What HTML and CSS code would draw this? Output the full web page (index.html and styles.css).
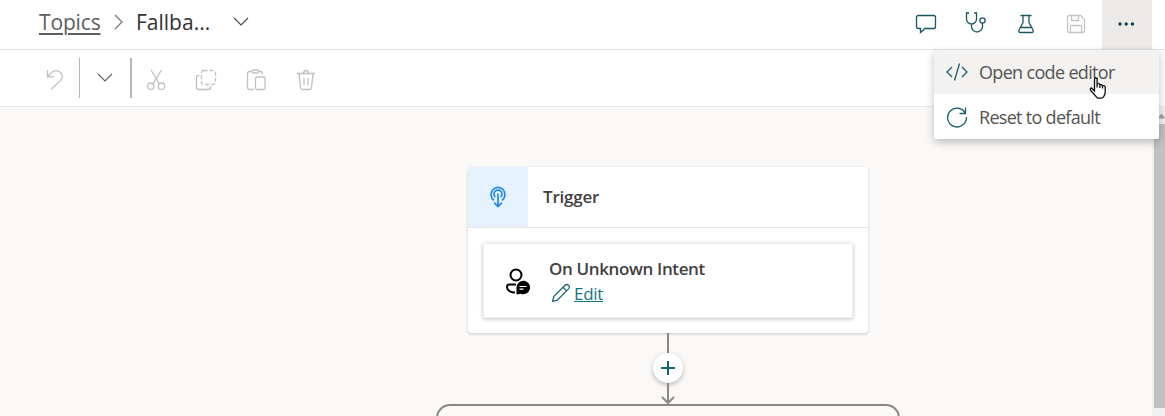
FILE: index.html
```html
<!DOCTYPE html>
<html lang="en">
<head>
<meta charset="utf-8">
<title>Topics</title>
<link rel="stylesheet" href="styles.css">
</head>
<body>
<div class="app">
  <header class="topbar">
    <nav class="crumbs">
      <a class="crumb-link">Topics</a>
      <svg class="crumb-sep" width="10" height="16" viewBox="0 0 10 16"><path d="M1 1l7 7-7 7"/></svg>
      <span class="crumb-current">Fallba...</span>
      <svg class="chev" width="16" height="10" viewBox="0 0 16 10"><path d="M1 1l7 7 7-7"/></svg>
    </nav>
    <div class="actions">
      <button class="action"><svg width="22" height="22" viewBox="0 0 22 22"><path d="M3.500 2.500h15q2 0 2 2v9q0 2-2 2h-8.500l-4.500 4v-4h-2q-2 0-2-2v-9q0-2 2-2z"/></svg></button>
      <button class="action raised"><svg width="22" height="24" viewBox="0 0 22 24"><path d="M4 2H1.500v6a5 5 0 0 0 10 0V2H9M6.500 13v2.500a5 5 0 0 0 11 0V12"/><circle cx="17.500" cy="9.500" r="2.600"/></svg></button>
      <button class="action"><svg width="20" height="22" viewBox="0 0 20 22"><path d="M4.500 2.500h11M7 2.500v7L3 17q-.8 2.500 1.500 2.500h11Q17.800 19.500 17 17l-4-7.500v-7M5 14.500h10"/></svg></button>
      <button class="action muted"><svg width="20" height="20" viewBox="0 0 20 20"><path d="M3.500 1.500h11l4 4v11q0 2-2 2h-13q-2 0-2-2v-13q0-2 2-2zM5.500 1.500v5h7v-5M4.500 18.500v-6q0-1 1-1h9q1 0 1 1v6"/></svg></button>
      <button class="action more"><svg width="18" height="6" viewBox="0 0 18 6"><circle cx="3" cy="3" r="1.700"/><circle cx="9.200" cy="3" r="1.700"/><circle cx="15.400" cy="3" r="1.700"/></svg></button>
    </div>
  </header>

  <div class="toolbar">
    <button class="tool undo"><svg width="20" height="22" viewBox="0 0 20 22"><path d="M2.500 2v6.800h6.800M2.800 8.500l4-4.200C13-.5 20.800 7 15.500 12.700L6 21.200"/></svg></button>
    <i class="rule"></i>
    <button class="tool drop"><svg class="chev" width="16" height="10" viewBox="0 0 16 10"><path d="M1 1l7 7 7-7"/></svg></button>
    <i class="rule thick"></i>
    <button class="tool"><svg width="20" height="22" viewBox="0 0 20 22"><path d="M5 1l8.500 14M15.500 1L7 15"/><circle cx="4.800" cy="17.200" r="3.200"/><circle cx="15.500" cy="17.200" r="3.200"/></svg></button>
    <button class="tool"><svg width="22" height="22" viewBox="0 0 22 22"><path d="M4.500 6.500h-1q-2 0-2 2V18q0 2.500 2.500 2.500h9.500q2 0 2-2v-1.500"/><rect x="6.500" y="1.500" width="14" height="14" rx="2" stroke-dasharray="4 2"/></svg></button>
    <button class="tool"><svg width="20" height="22" viewBox="0 0 20 22"><path d="M8 20.500H3.500q-2 0-2-2v-14q0-2 2-2H6M12 2.500h2.500q2 0 2 2v1"/><rect x="6" y="1" width="6.500" height="3" rx="1.500"/><rect x="9.500" y="8" width="9.500" height="12.500" rx="1.500"/></svg></button>
    <button class="tool"><svg width="20" height="22" viewBox="0 0 20 22"><path d="M1 4.500h18M7.500 4.500q0-3 2.500-3t2.500 3M3 4.500l1.500 14q.2 2 2 2h7q1.800 0 2-2L17 4.500M8 9v7M12 9v7"/></svg></button>
  </div>

  <main class="workspace">
    <div class="canvas">
      <section class="card">
        <div class="card-head">
          <div class="card-icon"><svg width="18" height="24" viewBox="0 0 18 24"><path d="M5 15.200a7 7 0 1 1 8 0M6.300 12a4 4 0 1 1 5.400 0M9 8.500v13M5 17.500l4 4 4-4"/></svg></div>
          <h2 class="card-title">Trigger</h2>
        </div>
        <div class="card-body">
          <div class="intent">
            <svg class="person" width="26" height="28" viewBox="0 0 26 28"><circle cx="11" cy="7" r="5.500"/><path d="M11 16.500H4q-2 0-2 2.500c0 3.500 4 5.500 8 5.500"/><path class="solid" d="M11.500 26.600V19.500a6.800 6.800 0 1 1 4.200 6.300z"/><path class="lines" d="M14.500 18.500h7M14.500 21.200h4"/></svg>
            <div>
              <div class="intent-name">On Unknown Intent</div>
              <div class="edit-row">
                <svg width="20" height="20" viewBox="0 0 20 20"><path d="M1.500 18.500l1.300-5L14 2.300q1.800-1.600 3.500 0t0 3.500L6.300 17.200zM12 4.300l3.700 3.700"/></svg>
                <a class="edit-link">Edit</a>
              </div>
            </div>
          </div>
        </div>
      </section>
      <div class="connector">
        <i class="stem"></i>
        <button class="add"><svg width="16" height="16" viewBox="0 0 16 16"><path d="M1 8h14M8 1v14"/></svg></button>
        <svg class="arrow" width="16" height="22" viewBox="0 0 16 22"><path d="M8 0v20M2 14l6 6 6-6"/></svg>
      </div>
      <div class="next-node"></div>
    </div>
    <div class="scroll"><svg width="11" height="17" viewBox="0 0 11 17"><path d="M3.500 11.500l4-5 4 5z"/></svg><div class="thumb"></div></div>
  </main>

  <div class="menu">
    <div class="menu-item hover"><svg width="22" height="20" viewBox="0 0 22 20"><path d="M6 5l-5 5 5 5M16 5l5 5-5 5M13.500 1.500l-5 17"/></svg><span class="open-label">Open code editor</span></div>
    <div class="menu-item"><svg width="22" height="22" viewBox="0 0 22 22"><path d="M19.500 7.500A9.400 9.400 0 1 0 20.400 11M19.500 1.500v6h-6"/></svg><span class="reset-label">Reset to default</span></div>
  </div>
  <svg class="pointer" width="18" height="22" viewBox="0 0 18 22"><path d="M5.500 14V2.500q0-1.500 1.300-1.500t1.300 1.500V7q2.300-1 2.700.8 2-.8 2.500 1 2.600-.6 2.900 1.500V15q0 2.500-1.700 5l-2 1.200H8.500L2 13.800q-1.800-2.600.5-2.800zM8.100 7v3.500M10.900 8v3M13.500 9v2.500"/></svg>
</div>
</body>
</html>
```

FILE: styles.css
```css
* { box-sizing: border-box; }
body { margin: 0; overflow: hidden; font-family: "Open Sans", "Noto Sans", sans-serif; color: #323130; }
button { border: 0; padding: 0; background: none; }
svg { display: block; flex: none; fill: none; stroke: currentColor; stroke-width: 1.3; }
.app { position: relative; height: 416px; display: flex; flex-direction: column; background: #fff; }

.topbar { height: 50px; flex: none; display: flex; justify-content: space-between; border-bottom: 1px solid #e6e6e6; padding: 0 13px 0 39px; }
.crumbs { display: flex; align-items: center; height: 44px; font-size: 21px; line-height: 28px; }
.crumb-link { width: 61px; color: #605e5c; text-decoration: underline; text-decoration-thickness: 2px; text-underline-offset: 3px; letter-spacing: -0.15px; white-space: nowrap; }
.crumb-sep { margin: 0 12px 0 14px; color: #777; }
.crumb-current { width: 74px; letter-spacing: 0; white-space: nowrap; }
.crumbs .chev { margin: 0 0 0 23px; color: #484644; stroke-width: 1.1; }
.actions { display: flex; }
.action { width: 50px; height: 49px; display: flex; align-items: center; justify-content: center; color: #165762; padding: 0 2px 1px 0; }
.raised { padding-bottom: 4px; }
.muted { color: #c4c4c4; }
.more { background: #ebeae9; color: #0b4650; }
.more svg { fill: currentColor; stroke: none; }

.toolbar { height: 57px; flex: none; display: flex; align-items: center; border-bottom: 1px solid #e9e9e9; padding-left: 30px; }
.tool { width: 50px; height: 42px; display: flex; align-items: center; justify-content: center; color: #c0c0c0; padding: 4px 2px 0 0; }
.undo { width: 49px; padding: 2px 0 0; }
.drop { color: #605e5c; padding: 0; }
.drop svg { stroke-width: 1.1; }
.rule { width: 1px; height: 40px; background: #b5b5b5; }
.rule.thick { width: 2px; }

.workspace { flex: 1; min-height: 0; display: flex; background: #faf9f8; }
.canvas { flex: 1; display: flex; flex-direction: column; align-items: center; padding: 60px 0 0 184px; overflow: hidden; }
.card { width: 400px; height: 166px; flex: none; background: #fff; border-radius: 4px; box-shadow: 0 1px 3px rgba(0,0,0,.2); overflow: hidden; }
.card-head { height: 61px; display: flex; border-bottom: 1px solid #e6e6e6; }
.card-icon { width: 60px; display: flex; align-items: center; justify-content: center; background: #e5f1fe; color: #2188e9; }
.card-icon svg { stroke-width: 1.7; }
.card-title { margin: 0 0 0 15px; color: #42403f; font-size: 17px; font-weight: 600; line-height: 60px; letter-spacing: -0.2px; }
.card-body { padding: 15px; }
.intent { height: 75px; display: flex; padding: 13px 0 0 21px; border: 1px solid #eee; border-radius: 2px; box-shadow: 0 1px 4px rgba(0,0,0,.24); }
.person { margin: 11px 18px 0 0; color: #000; stroke-width: 2; }
.solid { fill: #000; stroke: none; }
.lines { stroke: #fff; stroke-width: 1.2; }
.intent-name { color: #42403f; font-size: 17px; line-height: 24px; font-weight: 600; letter-spacing: -0.36px; }
.edit-row { display: flex; align-items: center; gap: 3px; height: 24px; margin-left: 2px; color: #155f70; }
.edit-row svg { stroke-width: 1.2; }
.edit-link { font-size: 17px; color: #177386; text-decoration: underline; letter-spacing: -0.3px; }
.connector { height: 71px; flex: none; display: flex; flex-direction: column; align-items: center; color: #8a8886; }
.stem { width: 2px; height: 20px; flex: none; background: #8a8886; }
.add { width: 30px; height: 30px; flex: none; border-radius: 50%; background: #fff; color: #0f687a; box-shadow: 0 2px 5px rgba(0,0,0,.25); display: flex; align-items: center; justify-content: center; }
.add svg, .arrow { stroke-width: 2; }
.next-node { width: 464px; height: 80px; flex: none; border: 2px solid #8a8886; border-radius: 14px; }
.scroll { width: 13px; padding-left: 2px; background: #f0f0f0; }
.scroll svg { fill: #a0a0a0; stroke: none; }
.thumb { height: 284px; background: #c1c1c1; }

.menu { position: absolute; left: 934px; top: 50px; width: 225px; background: #fff; border-radius: 2px; box-shadow: 0 3px 8px rgba(0,0,0,.25); }
.menu-item { height: 44px; display: flex; align-items: center; gap: 11px; padding-left: 12px; font-size: 18px; white-space: nowrap; color: #555351; }
.menu-item + .menu-item { height: 45px; }
.menu-item svg { color: #155f70; }
.hover { background: #f3f2f1; }
.open-label { letter-spacing: -0.67px; }
.reset-label { letter-spacing: -0.7px; }
.pointer { position: absolute; left: 1089px; top: 77px; fill: #fff; stroke: #111; }
```
